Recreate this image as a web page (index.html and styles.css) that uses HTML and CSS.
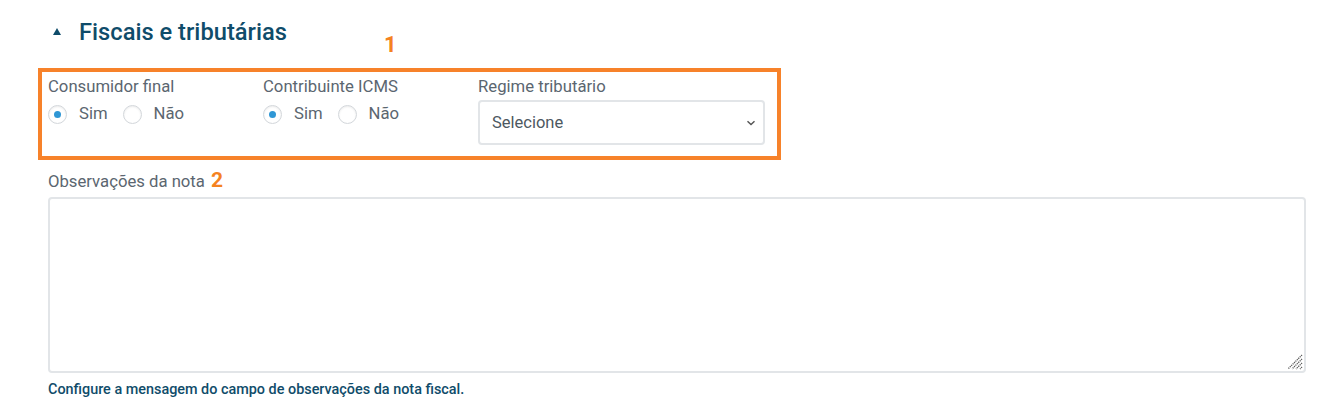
FILE: index.html
```html
<!DOCTYPE html>
<html lang="pt-BR">
<head>
<meta charset="utf-8">
<title>Fiscais e tributárias</title>
<link rel="stylesheet" href="styles.css">
</head>
<body>
<section class="section">
  <div class="section-head">
    <span class="caret"></span>
    <h2 class="title">Fiscais e tributárias</h2>
    <span class="marker marker-1">1</span>
  </div>
  <div class="highlight">
    <div class="field field-radio">
      <div class="label">Consumidor final</div>
      <div class="radios">
        <label class="radio"><span class="dot checked"></span>Sim</label>
        <label class="radio"><span class="dot"></span>Não</label>
      </div>
    </div>
    <div class="field field-radio">
      <div class="label">Contribuinte ICMS</div>
      <div class="radios">
        <label class="radio"><span class="dot checked"></span>Sim</label>
        <label class="radio"><span class="dot"></span>Não</label>
      </div>
    </div>
    <div class="field field-select">
      <div class="label">Regime tributário</div>
      <div class="select">
        <span>Selecione</span>
        <svg class="chev" width="10" height="6" viewBox="0 0 10 6"><path d="M1.5 1.2 L5 4.6 L8.5 1.2" fill="none" stroke="#555" stroke-width="1.4"/></svg>
      </div>
    </div>
  </div>
  <div class="obs">
    <div class="label">Observações da nota <span class="marker marker-2">2</span></div>
    <div class="textarea">
      <svg class="grip" width="18" height="18" viewBox="0 0 18 18"><path d="M17 3 L3 17 M17 7 L7 17 M17 11 L11 17 M17 15 L15 17" stroke="#5a5a5a" stroke-width="1.3" stroke-dasharray="1.2 0.8"/></svg>
    </div>
    <div class="help">Configure a mensagem do campo de observações da nota fiscal.</div>
  </div>
</section>
</body>
</html>
```
FILE: styles.css
```css
* { box-sizing: border-box; }
html, body { margin: 0; padding: 0; background: #fff; }
body { font-family: Roboto, "Liberation Sans", sans-serif; color: #5b6670; }

.section { padding: 0 36px 0 38px; }

.section-head { display: flex; align-items: center; height: 64px; padding-left: 15px; padding-top: 0; }
.caret { width: 0; height: 0; border-left: 4.5px solid transparent; border-right: 4.5px solid transparent; border-bottom: 7px solid #0f4c6a; margin-right: 18px; margin-top: -1px; }
.title { margin: 0; font-size: 23.7px; font-weight: 500; color: #0f4c6a; }
.marker { color: #f58220; font-weight: 700; }
.marker-1 { font-size: 22px; margin-left: 97px; margin-top: 24px; }

.highlight { margin-top: 4px; width: 743px; height: 92px; border: 4px solid #f7822a; display: flex; padding: 5px 0 0 6px; }
.label { font-size: 16.7px; line-height: 20px; color: #5b6670; }
.field-radio { width: 215px; }
.radios { display: flex; margin-top: 7px; }
.radio { display: flex; align-items: center; font-size: 16.7px; color: #5b6670; margin-right: 15px; line-height: 20px; }
.dot { width: 19px; height: 19px; border-radius: 50%; border: 1px solid #d3d7db; margin-right: 12px; position: relative; background: #fff; box-shadow: inset 0 1px 2px rgba(0,0,0,0.08); }
.dot.checked::after { content: ""; position: absolute; left: 5px; top: 5px; width: 7px; height: 7px; border-radius: 50%; background: #2f97d5; }

.select { margin-top: 3px; width: 287px; height: 45px; border: 2px solid #e2e5e8; border-radius: 4px; display: flex; align-items: center; justify-content: space-between; padding: 0 7px 0 12px; font-size: 16.5px; color: #4d5861; }
.chev { margin-top: 1px; }

.obs { padding-top: 10px; padding-left: 10px; }
.marker-2 { font-size: 21px; margin-left: 6px; }
.obs .label { display: flex; align-items: baseline; }
.textarea { margin-top: 5px; width: 1258px; height: 176px; border: 2px solid #e2e5e8; border-radius: 4px; position: relative; }
.grip { position: absolute; right: 1px; bottom: 1px; }
.help { margin-top: 8px; font-size: 14.4px; font-weight: 500; color: #0f4c6a; }
```
